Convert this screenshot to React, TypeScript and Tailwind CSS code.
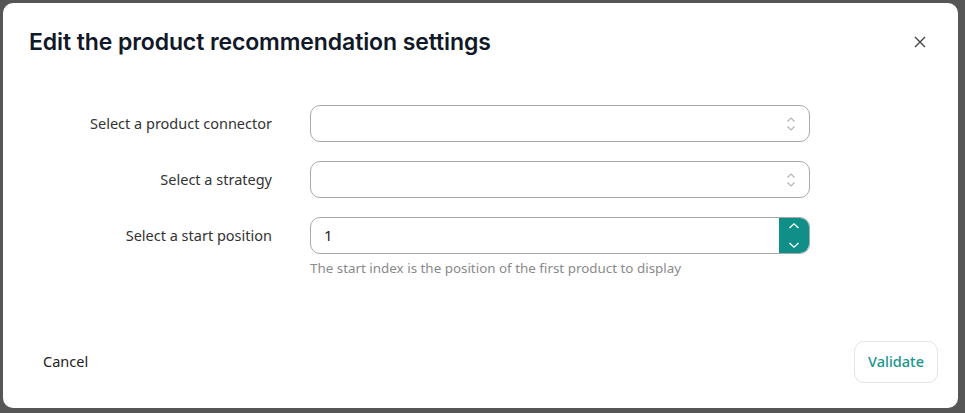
import { useState } from "react";

function UpDownIcon({ className = "" }: { className?: string }) {
  return (
    <svg viewBox="0 0 12 20" className={className} fill="none" stroke="currentColor" strokeWidth="1.2">
      <path d="M2.5 7.5 6 4l3.5 3.5" />
      <path d="M2.5 12.5 6 16l3.5-3.5" />
    </svg>
  );
}

function SelectField() {
  return (
    <div className="flex h-[37px] w-[500px] items-center justify-end rounded-[10px] border border-[#a9a9a9] bg-white pr-[12px]">
      <UpDownIcon className="h-[20px] w-[12px] text-[#b5b5b5]" />
    </div>
  );
}

export default function App() {
  const [start] = useState("1");

  return (
    <div className="h-[413px] w-[965px] bg-[#565656] p-[3px] pr-[7px] pb-[5px] font-['Inter',sans-serif]">
      <div className="flex h-full w-full flex-col rounded-[10px] bg-white">
        <div className="flex items-center justify-between pl-[26px] pr-[32px] pt-[24px]">
          <h2 className="text-[23px] font-semibold leading-[30px] tracking-[-0.1px] text-[#111827]">
            Edit the product recommendation settings
          </h2>
          <svg viewBox="0 0 12 12" className="h-[12px] w-[12px] text-[#444]" fill="none" stroke="currentColor" strokeWidth="1.4">
            <path d="M1 1l10 10M11 1 1 11" />
          </svg>
        </div>

        <div className="mt-[48px] flex flex-col gap-[19px] font-['Noto_Sans',sans-serif] text-[14.5px] text-[#333]">
          <div className="flex items-center">
            <label className="w-[269px] text-right">Select a product connector</label>
            <div className="ml-[38px]">
              <SelectField />
            </div>
          </div>
          <div className="flex items-center">
            <label className="w-[269px] text-right">Select a strategy</label>
            <div className="ml-[38px]">
              <SelectField />
            </div>
          </div>
          <div className="flex items-start">
            <label className="w-[269px] pt-[8px] text-right">Select a start position</label>
            <div className="ml-[38px] flex flex-col">
              <div className="flex h-[37px] w-[500px] items-stretch overflow-hidden rounded-[10px] border border-[#a9a9a9] bg-white">
                <span className="flex flex-1 items-center pl-[13px] text-[15px] text-[#222]">{start}</span>
                <div className="flex w-[30px] flex-col items-center justify-between bg-[#0f8f88] py-[4px] text-white">
                  <svg viewBox="0 0 12 8" className="h-[8px] w-[12px]" fill="none" stroke="currentColor" strokeWidth="1.3">
                    <path d="M1.5 6 6 1.8 10.5 6" />
                  </svg>
                  <svg viewBox="0 0 12 8" className="h-[8px] w-[12px]" fill="none" stroke="currentColor" strokeWidth="1.3">
                    <path d="M1.5 2 6 6.2 10.5 2" />
                  </svg>
                </div>
              </div>
              <p className="mt-[4px] text-[13.4px] text-[#8a8a8a]">
                The start index is the position of the first product to display
              </p>
            </div>
          </div>
        </div>

        <div className="mt-auto flex items-center justify-between pb-[25px] pl-[40px] pr-[20px] font-['Noto_Sans',sans-serif] text-[14.5px]">
          <button type="button" className="text-[#222]">
            Cancel
          </button>
          <button
            type="button"
            className="h-[42px] rounded-[10px] border border-[#e4e4e4] px-[13px] font-medium text-[#17958d]"
          >
            Validate
          </button>
        </div>
      </div>
    </div>
  );
}
